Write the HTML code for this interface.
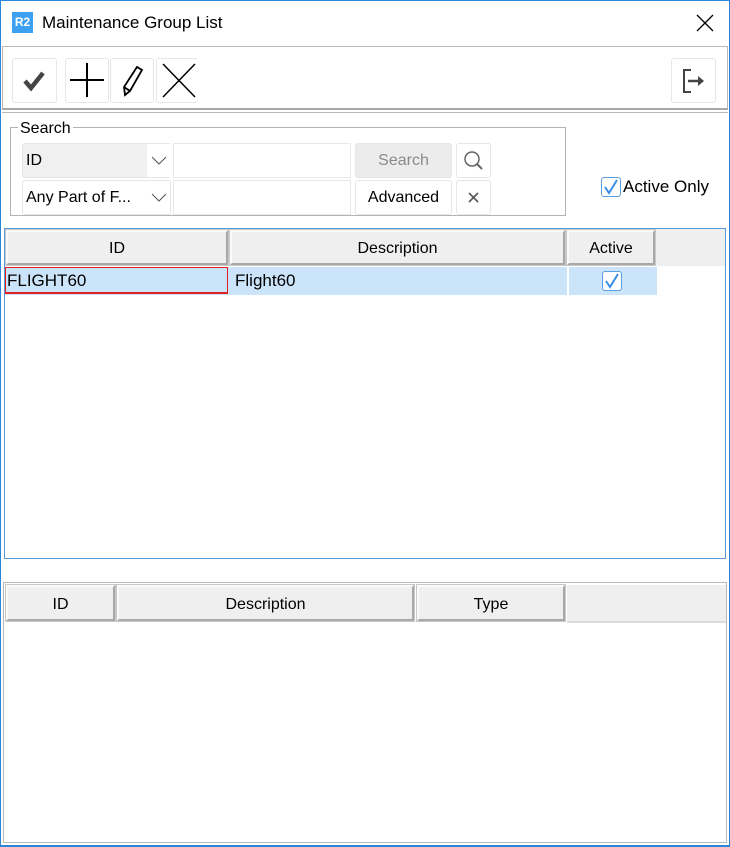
<!DOCTYPE html>
<html><head><style>
*{box-sizing:border-box;margin:0;padding:0}
body{width:730px;height:847px;position:relative;background:#fff;font-family:"Liberation Sans",sans-serif;font-size:16px;color:#000;overflow:hidden}
.a{position:absolute}
.win{left:0;top:0;width:730px;height:847px;border:1px solid #2b87d8;border-bottom:2px solid #2b87d8}
.btn{position:absolute;background:#fff;border:1px solid #e6e6e6;border-radius:3px}
.hd{position:absolute;background:#efefef;border:2px solid;border-color:#fafafa #a8a8a8 #a8a8a8 #fafafa;outline:1px solid #c8c8c8;text-align:center;font-size:16px;line-height:33px}
.hd2{line-height:36px}
.cb{position:absolute;width:20px;height:20px;border:1px solid #5a9de0;border-radius:3px;background:#fff}
</style></head><body>
<div class="a win"></div>
<div class="a" style="left:12px;top:12px;width:21px;height:21px;background:#3ea0f0;color:#fff;font-weight:bold;font-size:12px;line-height:21px;text-align:center">R2</div>
<div class="a" style="left:42px;top:13px;font-size:17px">Maintenance Group List</div>
<svg class="a" style="left:696px;top:14px" width="18" height="18"><path d="M1 1L17 17M17 1L1 17" stroke="#000" stroke-width="1.3"/></svg>
<div class="a" style="left:2px;top:46px;width:726px;height:64px;border:1px solid #b8b8b8;border-bottom:2px solid #a8a8a8"></div>
<div class="btn" style="left:12px;top:58px;width:45px;height:45px"><svg width="43" height="43"><path d="M12 22L18 29L30 14" stroke="#444" stroke-width="4.5" fill="none"/></svg></div>
<div class="btn" style="left:65px;top:58px;width:44px;height:45px"><svg width="42" height="43"><path d="M21 4V38M4 21H38" stroke="#000" stroke-width="2"/></svg></div>
<div class="btn" style="left:110px;top:58px;width:44px;height:45px"><svg width="42" height="43"><path d="M14 36L13 28L26 8L31 11L19 32Z M13 28L19 32" stroke="#000" stroke-width="1.8" fill="none"/></svg></div>
<div class="btn" style="left:156px;top:58px;width:42px;height:45px;border-right:none"><svg width="42" height="43"><path d="M6 5L38 38M38 5L6 38" stroke="#000" stroke-width="1.5"/></svg></div>
<div class="btn" style="left:671px;top:58px;width:45px;height:45px"><svg width="43" height="43"><path d="M19 11H12V33H19" stroke="#444" stroke-width="2" fill="none"/><path d="M16 22H28" stroke="#444" stroke-width="2.5"/><path d="M26 17L32 22L26 27Z" fill="#444"/></svg></div>
<div class="a" style="left:2px;top:112px;width:726px;height:1px;background:#b8b8b8"></div>
<div class="a" style="left:10px;top:127px;width:556px;height:89px;border:1px solid #b4b4b4"></div>
<div class="a" style="left:18px;top:120px;background:#fff;padding:0 2px;font-size:16px">Search</div>
<div class="btn" style="left:22px;top:143px;width:149px;height:35px;background:#f0f0f0;border-radius:3px"><span class="a" style="left:3px;top:8px">ID</span><div class="a" style="left:124px;top:0;width:24px;height:33px;background:#fff"></div><svg class="a" style="left:128px;top:12px" width="16" height="10"><path d="M1 1L8 8L15 1" stroke="#555" fill="none"/></svg></div>
<div class="a" style="left:173px;top:143px;width:178px;height:35px;border:1px solid #e8e8e8"></div>
<div class="btn" style="left:355px;top:143px;width:97px;height:35px;background:#ececec;color:#8a8a8a;text-align:center;line-height:33px">Search</div>
<div class="btn" style="left:456px;top:143px;width:35px;height:35px"><svg width="33" height="33"><circle cx="15" cy="15" r="7" stroke="#666" stroke-width="1.5" fill="none"/><path d="M20 20L25 25" stroke="#666" stroke-width="2"/></svg></div>
<div class="btn" style="left:22px;top:180px;width:149px;height:35px"><span class="a" style="left:3px;top:8px">Any Part of F...</span><svg class="a" style="left:128px;top:12px" width="16" height="10"><path d="M1 1L8 8L15 1" stroke="#555" fill="none"/></svg></div>
<div class="a" style="left:173px;top:180px;width:178px;height:35px;border:1px solid #e8e8e8"></div>
<div class="btn" style="left:355px;top:180px;width:97px;height:35px;text-align:center;line-height:33px">Advanced</div>
<div class="btn" style="left:456px;top:180px;width:35px;height:35px"><svg width="33" height="33"><path d="M12 12L21 21M21 12L12 21" stroke="#555" stroke-width="1.6"/></svg></div>
<div class="cb" style="left:601px;top:177px"><svg width="18" height="18"><path d="M3 9L7 15L15 2" stroke="#3a8ee6" stroke-width="2" fill="none"/></svg></div>
<div class="a" style="left:623px;top:177px;font-size:17px">Active Only</div>
<div class="a" style="left:4px;top:228px;width:722px;height:331px;border:1px solid #5a9ad8"></div>
<div class="a" style="left:5px;top:229px;width:720px;height:37px;background:#efefef"></div>
<div class="hd" style="left:6px;top:230px;width:222px;height:35px">ID</div>
<div class="hd" style="left:230px;top:230px;width:335px;height:35px">Description</div>
<div class="hd" style="left:567px;top:230px;width:88px;height:35px">Active</div>
<div class="a" style="left:5px;top:267px;width:652px;height:28px;background:#cce4f9"></div>
<div class="a" style="left:5px;top:267px;width:223px;height:27px;border:1px solid #e02020;border-bottom:2px solid #e02020;line-height:25px;font-size:17px;padding-left:1px">FLIGHT60</div>
<div class="a" style="left:235px;top:267px;line-height:27px;font-size:17px">Flight60</div>
<div class="a" style="left:567px;top:267px;width:2px;height:28px;background:#fff"></div>
<div class="cb" style="left:602px;top:271px"><svg width="18" height="18"><path d="M3 9L7 15L15 2" stroke="#3a8ee6" stroke-width="2" fill="none"/></svg></div>
<div class="a" style="left:3px;top:582px;width:724px;height:261px;border:1px solid #b8b8b8"></div>
<div class="a" style="left:567px;top:585px;width:159px;height:38px;background:#efefef;border-bottom:2px solid #dcdcdc"></div>
<div class="hd hd2" style="left:6px;top:585px;width:109px;height:36px">ID</div>
<div class="hd hd2" style="left:117px;top:585px;width:297px;height:36px">Description</div>
<div class="hd hd2" style="left:417px;top:585px;width:148px;height:36px">Type</div>
</body></html>
